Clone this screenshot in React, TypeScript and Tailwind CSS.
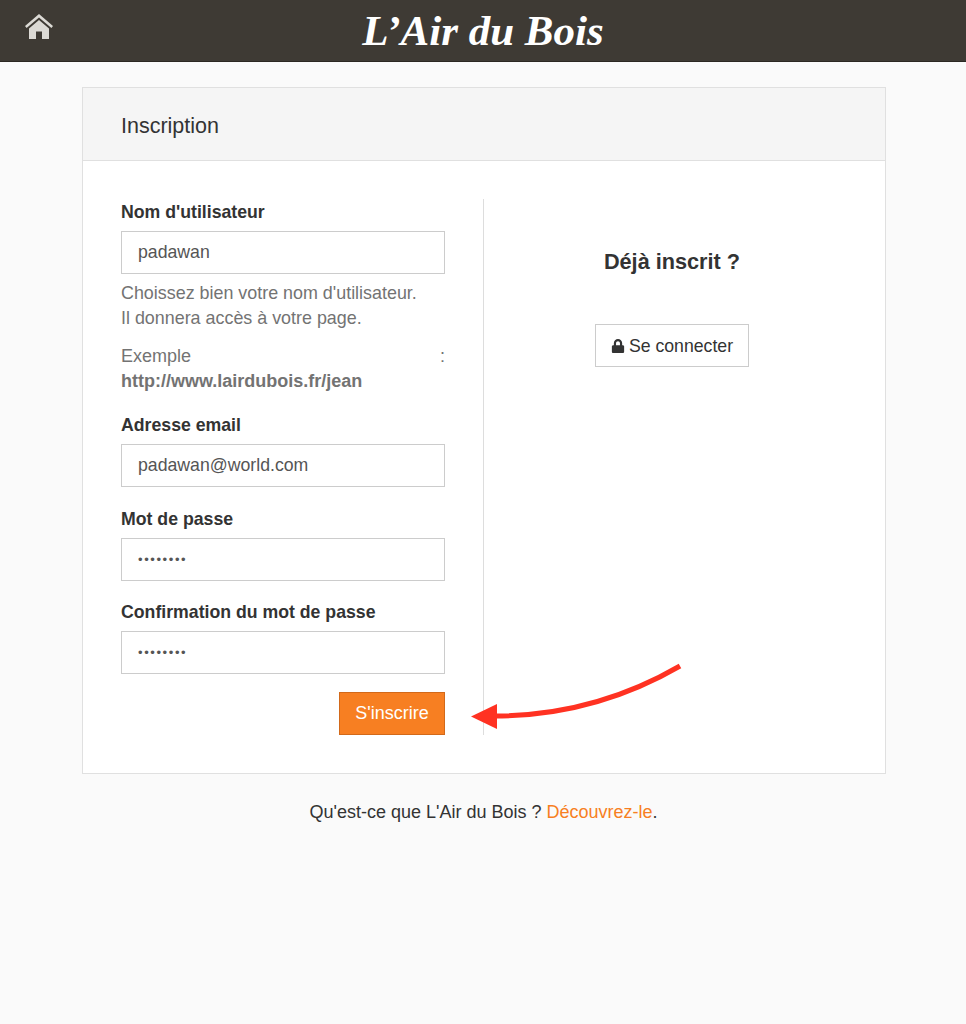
import React from "react";
import { FaLock } from "react-icons/fa";

const Field = ({ label, value, secret, className = "" }: { label: string; value: string; secret?: boolean; className?: string }) => (
  <div className={className}>
    <label className="block font-bold text-[#333] leading-[26px] mb-[6px]">{label}</label>
    <input
      readOnly
      value={value}
      className={
        secret
          ? "block w-full h-[43px] border border-[#ccc] bg-white px-4 text-[#555] text-[13px] tracking-[1.6px] outline-none"
          : "block w-full h-[43px] border border-[#ccc] bg-white px-4 text-[#555] outline-none"
      }
    />
  </div>
);

const App = () => {
  return (
    <div className="relative min-h-[1024px] bg-[#fafafa] text-[17.7px] text-[#333] font-['Liberation_Sans',Arial,sans-serif]">
      <header className="grid grid-cols-[1fr_auto_1fr] items-center h-[62px] bg-[#3e3a34] border-b border-[#2b2822]">
        <div className="pl-[25px] pb-[7px]">
          <svg width="28" height="26" viewBox="0 0 28 26" fill="#dcdad5">
            <path d="M14 0 L28 12 L26.4 14 L14 3.6 L1.6 14 L0 12 Z" />
            <path fillRule="evenodd" d="M14 6 L24 14.4 V25 H17 V17.5 H11 V25 H4 V14.4 Z" />
          </svg>
        </div>
        <div className="font-['Liberation_Serif',serif] italic font-bold text-white text-[43px] leading-none">
          L’Air du Bois
        </div>
        <div />
      </header>

      <main className="w-[804px] ml-[82px] mt-[25px] border border-[#e0e0e0] bg-white">
        <div className="h-[73px] bg-[#f5f5f5] border-b border-[#e0e0e0] flex items-center px-[38px] pt-[4px] text-[21.5px] text-[#333]">
          Inscription
        </div>
        <div className="flex px-[38px] py-[38px]">
          <form className="w-[363px] pr-[38px] border-r border-[#ddd]">
            <Field label="Nom d'utilisateur" value="padawan" />
            <p className="mt-[7px] leading-[25px] text-[17.9px] text-[#737373]">
              Choissez bien votre nom d'utilisateur.
              <br />
              Il donnera accès à votre page.
            </p>
            <p className="mt-[13px] leading-[25px] text-[18px] text-[#737373] text-justify">
              Exemple : <b>http://www.lairdubois.fr/jean</b>
            </p>
            <Field label="Adresse email" value="padawan@world.com" className="mt-[18px]" />
            <Field label="Mot de passe" value="••••••••" secret className="mt-[19px]" />
            <Field label="Confirmation du mot de passe" value="••••••••" secret className="mt-[18px]" />
            <div className="flex justify-end mt-[18px]">
              <button
                type="button"
                className="w-[106px] h-[43px] bg-[#f77f22] border border-[#d2691a] text-white text-[18px]"
              >
                S'inscrire
              </button>
            </div>
          </form>
          <div className="flex-1 flex flex-col items-center pl-[13px] pt-[48px]">
            <h2 className="text-[21.7px] font-bold leading-[30px] text-[#333]">Déjà inscrit ?</h2>
            <button
              type="button"
              className="mt-[47px] w-[154px] h-[43px] border border-[#ccc] bg-white flex items-center justify-center gap-[4px] pt-[1px] text-[#333]"
            >
              <FaLock size={14} />
              Se connecter
            </button>
          </div>
        </div>
      </main>

      <p className="mt-[26px] pl-[1px] text-center leading-[25px] text-[18px] text-[#333]">
        Qu'est-ce que L'Air du Bois ? <a className="text-[#f77f22]">Découvrez-le</a>.
      </p>

      <svg className="absolute left-[465px] top-[655px]" width="225" height="85" viewBox="465 655 225 85" fill="none">
        <path d="M680 666 C630 695 570 716 494 716" stroke="#ff3222" strokeWidth="5" />
        <path d="M471 716.5 L497 704 V729 Z" fill="#ff3222" />
      </svg>
    </div>
  );
};

export default App;
